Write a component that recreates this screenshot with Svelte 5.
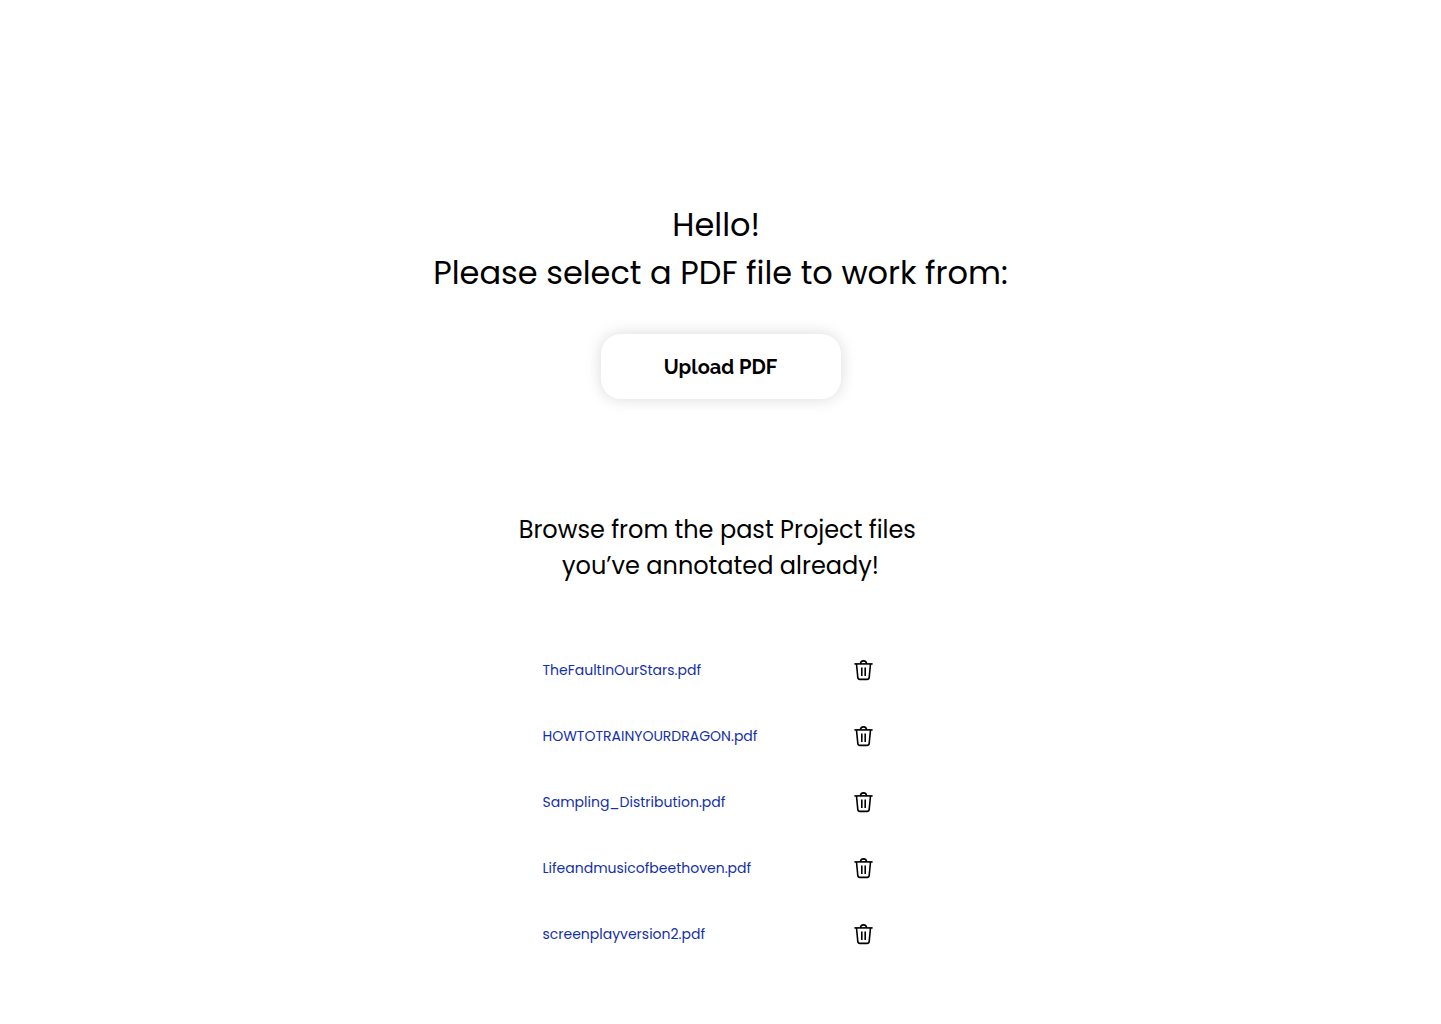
<script>
  let files = $state([
    'TheFaultInOurStars.pdf',
    'HOWTOTRAINYOURDRAGON.pdf',
    'Sampling_Distribution.pdf',
    'Lifeandmusicofbeethoven.pdf',
    'screenplayversion2.pdf'
  ]);

  function remove(name) {
    files = files.filter((file) => file !== name);
  }
</script>

<main>
  <h1>Hello!&nbsp;<br />Please select a PDF file to work from:</h1>
  <button class="upload" type="button">Upload PDF</button>

  <section>
    <h2>Browse from the past Project files&nbsp;<br />you’ve annotated already!</h2>
    <ul>
      {#each files as file (file)}
        <li>
          <a href="#{file}">{file}</a>
          <button class="delete" type="button" aria-label="Delete {file}" onclick={() => remove(file)}>
            <svg viewBox="0 0 24 24" width="24" height="24" aria-hidden="true">
              <path d="M2.4 5.9h18.2" />
              <path d="M8.5 5.9a3 3 0 0 1 6 0" />
              <path d="M4.5 6l1.3 13.4c.15 1.3.8 2 2.1 2h7.2c1.3 0 1.95-.7 2.1-2L18.5 6" />
              <path d="M9.8 9.6v8.4M13.2 9.6v8.4" />
            </svg>
          </button>
        </li>
      {/each}
    </ul>
  </section>
</main>

<style>
  :global(body) {
    margin: 0;
    background: #fff;
  }

  main {
    display: flex;
    flex-direction: column;
    align-items: center;
    padding: 201px 24px 57px;
    color: #000;
    font-family: Poppins, Inter, sans-serif;
  }

  h1,
  h2 {
    margin: 0;
    font-weight: 400;
    text-align: center;
  }

  h1 {
    font-size: 32px;
    line-height: 48px;
  }

  h2 {
    font-size: 24px;
    line-height: 36px;
  }

  button {
    border: 0;
    background: #fff;
    color: inherit;
    cursor: pointer;
  }

  .upload {
    min-width: 240px;
    margin-top: 37px;
    padding: 21px 32px 20px;
    border-radius: 20px;
    box-shadow: 0 0 16px rgba(0, 0, 0, 0.15);
    font: 700 20px/24px Raleway, Lato, sans-serif;
  }

  section {
    display: flex;
    flex-direction: column;
    align-items: center;
    margin-top: 113px;
  }

  ul {
    box-sizing: border-box;
    width: 100%;
    max-width: 356px;
    margin: 74px 0 0;
    padding: 0 22px 0 0;
    display: grid;
    gap: 42px;
    list-style: none;
  }

  li {
    display: flex;
    align-items: center;
    justify-content: space-between;
  }

  a {
    color: #1430a8;
    font-size: 14px;
    line-height: 24px;
    text-decoration: none;
  }

  .delete {
    display: flex;
    padding: 0;
  }

  svg {
    fill: none;
    stroke: #000;
    stroke-width: 1.6;
    stroke-linejoin: round;
  }
</style>
